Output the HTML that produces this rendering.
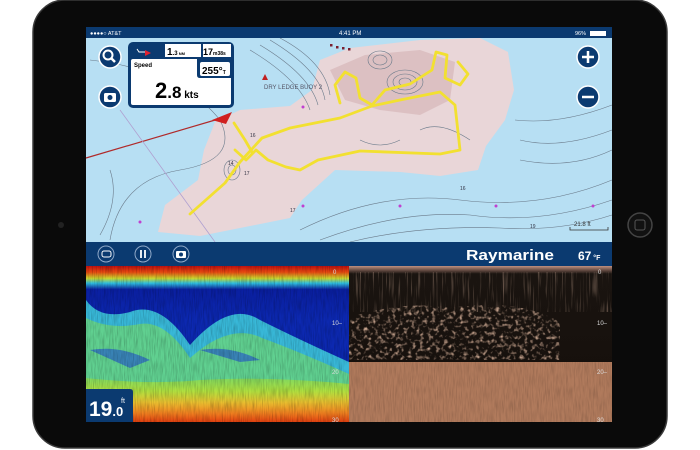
<!DOCTYPE html>
<html><head><meta charset="utf-8"><style>
html,body{margin:0;padding:0;background:#fff;width:700px;height:450px;overflow:hidden;font-family:"Liberation Sans",sans-serif}
svg{position:absolute;left:0;top:0}
</style></head><body>
<svg width="700" height="450" viewBox="0 0 700 450" xmlns="http://www.w3.org/2000/svg">
<defs>
<filter id="n1" x="0" y="0" width="1" height="1"><feTurbulence type="fractalNoise" baseFrequency="0.9 0.08" numOctaves="2" seed="3"/><feColorMatrix values="0 0 0 0 0  0 0 0 0 0  0 0 0 0 0  0 0 0 0.9 -0.35"/><feComposite in2="SourceGraphic" operator="in"/></filter>
<filter id="n2" x="0" y="0" width="1" height="1"><feTurbulence type="fractalNoise" baseFrequency="0.25" numOctaves="2" seed="7"/><feColorMatrix values="0 0 0 0 0.85  0 0 0 0 0.55  0 0 0 0 0.4  0 0 0 2.2 -1.1"/><feComposite in2="SourceGraphic" operator="in"/></filter>
<filter id="n3" x="0" y="0" width="1" height="1"><feTurbulence type="fractalNoise" baseFrequency="0.6 0.03" numOctaves="2" seed="11"/><feColorMatrix values="0 0 0 0 0.6  0 0 0 0 0.4  0 0 0 0 0.3  0 0 0 2 -1.1"/><feComposite in2="SourceGraphic" operator="in"/></filter>
<linearGradient id="lg" x1="0" y1="0" x2="0" y2="1">
<stop offset="0" stop-color="#c01010"/><stop offset="0.04" stop-color="#e84a10"/><stop offset="0.08" stop-color="#c8d830"/><stop offset="0.11" stop-color="#30c0e0"/><stop offset="0.15" stop-color="#0a1fa0"/><stop offset="0.35" stop-color="#0c28b0"/>
</linearGradient>
<linearGradient id="lg2" x1="0" y1="0" x2="0" y2="1">
<stop offset="0" stop-color="#80d860"/><stop offset="0.3" stop-color="#b0e040"/><stop offset="0.55" stop-color="#e8c030"/><stop offset="0.8" stop-color="#f08020"/><stop offset="1" stop-color="#e04010"/>
</linearGradient>
<linearGradient id="rb" x1="0" y1="0" x2="0" y2="1">
<stop offset="0" stop-color="#c09080"/><stop offset="0.05" stop-color="#1a1410"/><stop offset="1" stop-color="#140e0a"/>
</linearGradient>
</defs>
<rect x="33" y="0" width="634" height="448" rx="32" fill="#0a0a0a" stroke="#3a3a3a" stroke-width="1.5"/>
<circle cx="61" cy="225" r="3" fill="#222"/>
<circle cx="640" cy="225" r="12" fill="#111" stroke="#444" stroke-width="1.5"/>
<rect x="635" y="220" width="10" height="10" rx="2" fill="none" stroke="#555" stroke-width="1"/>
<rect x="86" y="27" width="526" height="216" fill="#b7dff3"/>
<path d="M158,232 L165,205 L198,180 L204,150 L215,122 L240,110 L290,106 L312,90 L320,60 L350,48 L420,40 L480,38 L508,52 L514,90 L505,120 L486,146 L478,170 L440,176 L400,172 L335,170 L302,200 L290,218 L250,226 L200,236 Z" fill="#e9d6d8"/>
<path d="M330,70 L365,55 L420,50 L455,62 L450,100 L420,115 L380,110 L345,100 Z" fill="#dcc0c2"/>
<g fill="none" stroke="#6a7a8a" stroke-width="0.6">
<path d="M90,60 Q180,70 220,120 Q240,160 180,170 Q120,180 110,240"/>
<path d="M300,230 Q380,190 460,200 Q540,210 612,180"/>
<path d="M320,240 Q400,210 470,215 Q540,225 612,200"/>
<path d="M350,242 Q420,225 500,228 Q560,232 612,215"/>
<path d="M520,140 Q560,150 612,130"/><path d="M515,120 Q560,125 612,105"/><path d="M520,160 Q570,170 612,150"/>
<path d="M250,50 Q300,80 310,110"/><path d="M260,45 Q310,75 318,105"/><path d="M270,40 Q320,70 325,100"/><path d="M280,38 Q325,62 330,95"/>
<ellipse cx="405" cy="82" rx="18" ry="12"/><ellipse cx="405" cy="82" rx="12" ry="8"/><ellipse cx="405" cy="82" rx="6" ry="4"/>
<ellipse cx="380" cy="60" rx="12" ry="9"/><ellipse cx="380" cy="60" rx="7" ry="5"/>
<ellipse cx="232" cy="170" rx="8" ry="10"/><ellipse cx="232" cy="170" rx="4" ry="5"/>
<path d="M110,170 Q120,200 100,235"/><path d="M420,130 Q440,120 470,140"/><path d="M360,140 Q380,150 400,140"/>
</g>
<path d="M86,158 L222,118" stroke="#b02a2a" stroke-width="1.2"/>
<path d="M212,120 L232,112 L226,124 Z" fill="#d02020"/>
<path d="M120,110 L215,242" stroke="#b0a0d0" stroke-width="0.8"/>
<g fill="none" stroke="#f2e030" stroke-width="2.8" stroke-linejoin="round" stroke-linecap="round">
<path d="M190,214 L225,183 L240,162 L262,138 L290,128 L340,118 L372,106 L400,100 L440,92 L455,105 L460,150 L440,154 L360,151 L318,160 L300,170 L286,167 L268,160 L256,150 L246,160 L235,150"/>
<path d="M234,123 L245,140 L252,152"/>
<path d="M340,103 L335,85 L345,72 L356,78 L360,98 L372,105 L385,90 L410,84 L432,70 L436,52 L447,55 L445,78 L460,85 L468,74 L458,62"/>
</g>
<path d="M262,80 l3,-6 l3,6 z" fill="#c02020"/>
<text x="264" y="89" font-size="6" fill="#556">DRY LEDGE BUOY 2</text>
<g fill="#7a2030"><rect x="330" y="44" width="2.5" height="2.5"/><rect x="336" y="46" width="2.5" height="2.5"/><rect x="342" y="47" width="2.5" height="2.5"/><rect x="348" y="48" width="2.5" height="2.5"/></g>
<g fill="#c040d0"><circle cx="140" cy="222" r="1.5"/><circle cx="303" cy="206" r="1.5"/><circle cx="400" cy="206" r="1.5"/><circle cx="496" cy="206" r="1.5"/><circle cx="593" cy="206" r="1.5"/><circle cx="303" cy="107" r="1.5"/></g>
<g font-size="5" fill="#334"><text x="460" y="190">16</text><text x="530" y="228">19</text><text x="290" y="212">17</text><text x="250" y="137">16</text><text x="228" y="165">14</text><text x="244" y="175">17</text></g>
<path d="M570,227 v3 h38 v-3" stroke="#333" fill="none" stroke-width="0.8"/><text x="574" y="226" font-size="6" fill="#333">21.8  ft</text>
<rect x="86" y="27" width="526" height="11" fill="#0b3a70"/>
<text x="90" y="35" font-size="5.5" fill="#fff">●●●●○ AT&amp;T</text>
<text x="339" y="35" font-size="6" fill="#fff">4:41 PM</text>
<text x="575" y="35" font-size="5.5" fill="#fff">96%</text><rect x="590" y="31" width="16" height="5" fill="#fff"/>
<g stroke="#fff" stroke-width="1.5" fill="#0b3a70">
<circle cx="110" cy="57" r="11"/><circle cx="110" cy="97" r="11"/>
<circle cx="588" cy="57" r="11"/><circle cx="588" cy="97" r="11"/></g>
<circle cx="108" cy="55" r="4.5" fill="none" stroke="#fff" stroke-width="2"/><path d="M111,58 L115,62" stroke="#fff" stroke-width="2.5"/>
<rect x="104" y="93" width="12" height="9" rx="1.5" fill="#fff"/><circle cx="110" cy="97.5" r="2.5" fill="#0b3a70"/>
<path d="M588,51 v12 M582,57 h12" stroke="#fff" stroke-width="2.5"/><path d="M582,97 h12" stroke="#fff" stroke-width="2.5"/>
<rect x="128" y="42" width="106" height="66" rx="5" fill="#0b3a70"/>
<rect x="131" y="59" width="100" height="46" rx="2" fill="#fff"/>
<rect x="165" y="44" width="36" height="13" fill="#fff"/><rect x="203" y="44" width="28" height="13" fill="#fff"/>
<path d="M197,59 v16 q0,3 3,3 h31 v-19 z" fill="#0b3a70"/><rect x="200" y="62" width="30" height="14" rx="2" fill="#fff"/>
<path d="M137,49 l2,3 h8" stroke="#fff" stroke-width="1" fill="none"/><path d="M145,50 l6,3 l-6,3 z" fill="#e02030"/>
<text x="167" y="55" font-size="10" font-weight="bold" fill="#000">1<tspan font-size="6">.3</tspan><tspan font-size="4"> NM</tspan></text>
<text x="203" y="55" font-size="9" font-weight="bold" fill="#000">17<tspan font-size="5">m38s</tspan></text>
<text x="134" y="67" font-size="6" font-weight="bold" fill="#000">Speed</text>
<text x="202" y="74" font-size="10" font-weight="bold" fill="#000">255°<tspan font-size="5">T</tspan></text>
<text x="155" y="98" font-size="22" font-weight="bold" fill="#000">2<tspan font-size="17">.8</tspan><tspan font-size="10"> kts</tspan></text>
<rect x="86" y="242" width="526" height="24" fill="#0b3a70"/>
<g fill="none" stroke="#8fa8c8" stroke-width="1"><circle cx="106" cy="254" r="8"/><circle cx="143" cy="254" r="8"/><circle cx="181" cy="254" r="8"/></g>
<rect x="102" y="251" width="9" height="6" rx="2" fill="none" stroke="#fff" stroke-width="1"/>
<path d="M141,250 v8 M145,250 v8" stroke="#fff" stroke-width="1.8"/>
<rect x="176" y="251" width="10" height="7" rx="1" fill="#fff"/><circle cx="181" cy="254.5" r="2" fill="#0b3a70"/>
<text x="510" y="260" font-size="15" font-weight="bold" fill="#fff" text-anchor="middle" textLength="88" lengthAdjust="spacingAndGlyphs">Raymarine</text>
<text x="578" y="260" font-size="12" font-weight="bold" fill="#fff">67<tspan font-size="7"> °F</tspan></text>
<rect x="86" y="266" width="263" height="156" fill="url(#lg)"/>
<path d="M86,300 Q100,320 130,312 Q160,300 190,345 Q230,300 260,320 Q300,340 349,362 L349,422 L86,422 Z" fill="#38b8d8"/>
<path d="M86,318 Q110,330 140,324 Q165,320 190,358 Q230,322 262,338 Q300,352 349,374 L349,422 L86,422 Z" fill="#60d090"/>
<path d="M86,378 Q150,385 200,380 Q270,376 349,384 L349,422 L86,422 Z" fill="url(#lg2)"/>
<path d="M90,350 Q120,345 150,360 L130,368 Z M200,350 Q230,345 260,360 L240,362 Z" fill="#2050d0" opacity="0.6"/>
<rect x="86" y="266" width="263" height="156" fill="#000" filter="url(#n1)" opacity="0.5"/>
<g font-size="6" fill="#ddd"><text x="333" y="274">0</text><text x="332" y="325">10–</text><text x="332" y="374">20</text><text x="332" y="422">30</text></g>
<rect x="349" y="266" width="263" height="156" fill="url(#rb)"/>
<rect x="349" y="272" width="263" height="40" fill="#705040" filter="url(#n3)" opacity="0.7"/>
<path d="M349,318 Q400,300 450,308 Q520,298 560,322 L560,360 L349,360 Z" fill="#a07050" filter="url(#n2)"/>
<rect x="349" y="362" width="263" height="60" fill="#b07a5c"/>
<rect x="349" y="362" width="263" height="60" fill="#000" filter="url(#n1)" opacity="0.35"/>
<g font-size="6" fill="#ddd"><text x="598" y="274">0</text><text x="597" y="325">10–</text><text x="597" y="374">20–</text><text x="597" y="422">30</text></g>
<path d="M86,389 h44 q3,0 3,3 v30 h-47 z" fill="#0b3a70"/>
<text x="89" y="416" font-size="21" font-weight="bold" fill="#fff">19<tspan font-size="13">.0</tspan></text>
<text x="121" y="403" font-size="7" fill="#fff">ft</text>
</svg>
</body></html>
